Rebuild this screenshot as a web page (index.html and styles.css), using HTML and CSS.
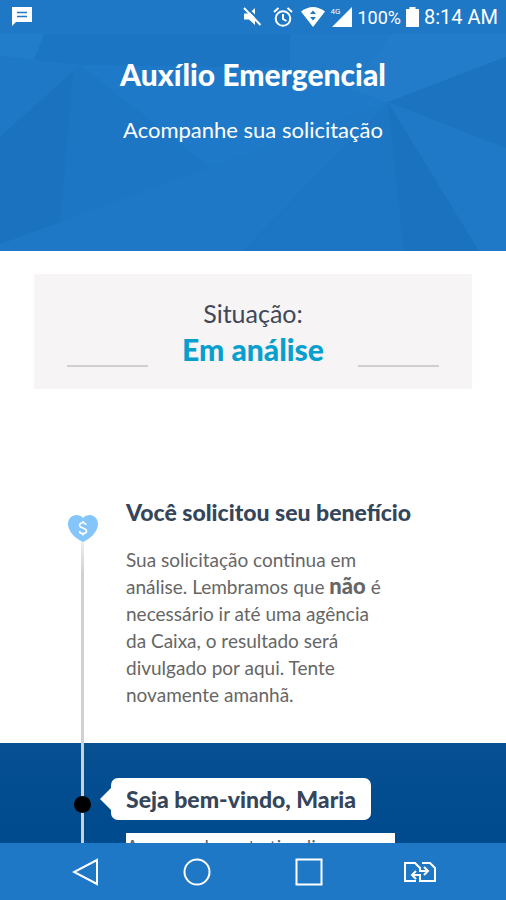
FILE: index.html
```html
<!DOCTYPE html>
<html lang="pt-BR">
<head>
    <meta charset="UTF-8">
    <title>Auxílio Emergencial</title>
    <meta name="viewport" content="width=device-width, initial-scale=1">
    <link rel="stylesheet" href="styles.css">
</head>
<body>
    <div class="status-bar">
        <svg width="20" height="20" viewBox="0 0 20 20" fill="#fff"><path d="M0 0h20v15H4l-4 4z"/><path d="M5 5.5h10M5 9.5h10" stroke="#1e78c6" stroke-width="1.3"/></svg>
        <div class="status-icons">
            <svg width="20" height="20" viewBox="0 0 20 20"><path d="M2 6.500h5l6-5.500v17l-6-5.500H2z" fill="#fff"/><path d="M4 0l16 16" stroke="#1e78c6" stroke-width="2"/><path d="M2 1l16.500 17" stroke="#fff" stroke-width="2"/></svg>
            <svg class="alarm" width="20" height="20" viewBox="0 0 20 20" fill="none" stroke="#fff" stroke-width="2"><circle cx="10" cy="11.5" r="7.3"/><path d="M1 5l4.500-4M19 5l-4.500-4M10 7v5l3.500 2"/></svg>
            <svg width="24" height="20" viewBox="0 0 24 20"><path d="M0 4.500Q12-4.500 24 4.500L12 20z" fill="#fff"/><path d="M12 3.500l3 3.500H9zM12 13.500L9 10h6z" fill="#1e78c6"/></svg>
            <span class="signal">
                <span class="signal-type">4G</span>
                <svg width="20" height="20" viewBox="0 0 20 20"><path d="M20 0v20H0z" fill="#fff"/></svg>
            </span>
            <span class="battery">100%</span>
            <svg width="13" height="20" viewBox="0 0 13 20"><path d="M3.500 0h6v2H13v18H0V2h3.500z" fill="#fff"/></svg>
            <span class="clock">8:14 AM</span>
        </div>
    </div>

    <main>
        <header class="hero">
            <svg class="hero-bg" viewBox="0 0 506 217" preserveAspectRatio="none">
                <path d="M0 0h44L34 26 0 22z" fill="#227dca"/>
                <path d="M44 0h246v34L80 31 34 26z" fill="#1c75c2"/>
                <path d="M290 0h216v23L388 68l-98-8z" fill="#217bc8"/>
                <path d="M392 0h114v23L388 68l-42-6z" fill="#247ecb"/>
                <path d="M0 22l80 9L0 103z" fill="#2079c7"/>
                <path d="M80 31l130 102L0 210V103z" fill="#1c76c3"/>
                <path d="M73 38L60 188 0 210V103z" fill="#1b73bf"/>
                <path d="M80 31l210 3 98 34-178 65z" fill="#1f7aca"/>
                <path d="M388 68L242 217h162z" fill="#1c76c4"/>
                <path d="M388 68l16 149h75z" fill="#1b72be"/>
                <path d="M388 68l118 46v103h-27z" fill="#217ac7"/>
                <path d="M388 68l118-45v91z" fill="#1c74c1"/>
            </svg>
            <h1>Auxílio Emergencial</h1>
            <p>Acompanhe sua solicitação</p>
        </header>

        <section class="card">
            <div class="card-line"></div>
            <div class="card-text">
                <p>Situação:</p>
                <h2>Em análise</h2>
            </div>
            <div class="card-line"></div>
        </section>

        <section class="step">
            <div class="marker">
                <svg class="heart" width="30" height="27" viewBox="0 0 30 27"><path d="M15 27C10 25 0 18 0 9 0 1 9-3 15 3c6-6 15-2 15 6 0 9-10 16-15 18z" fill="#84c5fb"/><path d="M18 10c0-3-6.500-3-6.500.500 0 3 7 2 7 5.500s-7 3.500-7 0M15 6v2M15 18.500v2" fill="none" stroke="#fff" stroke-width="1.600"/></svg>
                <div class="line line-fade"></div>
            </div>
            <div class="step-body">
                <h3>Você solicitou seu benefício</h3>
                <p>
                    Sua solicitação continua em<br>
                    análise. Lembramos que <strong>não</strong> é<br>
                    necessário ir até uma agência<br>
                    da Caixa, o resultado será<br>
                    divulgado por aqui. Tente<br>
                    novamente amanhã.
                </p>
            </div>
        </section>

        <section class="step welcome">
            <div class="marker">
                <div class="line"></div>
                <span class="dot"></span>
            </div>
            <div class="step-body">
                <h3 class="bubble">Seja bem-vindo, Maria</h3>
                <p class="note">Acompanhe esta timeline</p>
            </div>
        </section>
    </main>

    <nav class="nav-bar">
        <button aria-label="Voltar"><svg width="28" height="28" viewBox="0 0 28 28"><path d="M25 2v24L2 14z"/></svg></button>
        <button aria-label="Início"><svg width="28" height="28" viewBox="0 0 28 28"><circle cx="14" cy="14" r="12.500"/></svg></button>
        <button aria-label="Recentes"><svg width="28" height="28" viewBox="0 0 28 28"><path d="M1.500 1.500h25v25h-25z"/></svg></button>
        <button aria-label="Trocar chip"><svg width="32" height="22" viewBox="0 0 32 22"><path d="M12 20H1V2h10l5 5v3h8M20 6l4 4-4 4M18 2h8l5 5v13H16v-6H8M12 10l-4 4 4 4"/></svg></button>
    </nav>
</body>
</html>
```
FILE: styles.css
```css
* {
    box-sizing: border-box;
}
body {
    margin: 0;
    height: 100vh;
    display: flex;
    flex-direction: column;
    font-family: Lato, "Liberation Sans", sans-serif;
    background: #fff;
    color: #666;
}
h1, h2, h3, p {
    margin: 0;
}
h1, h2, h3, strong {
    font-weight: 900;
}
svg {
    display: block;
    flex: none;
}

/* status bar */
.status-bar {
    flex: none;
    display: flex;
    justify-content: space-between;
    align-items: center;
    height: 34px;
    padding: 0 8px 0 12px;
    background: #1e78c6;
    color: #fff;
    font-family: Roboto, sans-serif;
}
.status-icons {
    display: flex;
    align-items: center;
    gap: 5px;
}
.alarm {
    margin: 0 3px 0 6px;
}
.signal {
    position: relative;
    padding-left: 2px;
}
.signal-type {
    position: absolute;
    left: 0;
    top: 0;
    font-size: 8px;
    line-height: 9px;
}
.battery {
    font-size: 18px;
}
.clock {
    font-size: 20px;
}

main {
    flex: 1;
    min-height: 0;
    overflow: hidden;
}

/* top banner */
.hero {
    position: relative;
    height: 217px;
    padding-top: 24px;
    background: #1e78c6;
    color: #fff;
    text-align: center;
}
.hero-bg {
    position: absolute;
    inset: 0;
    width: 100%;
    height: 100%;
    opacity: 0.8;
}
.hero h1,
.hero p {
    position: relative;
}
.hero h1 {
    font-size: 30px;
    line-height: 32px;
}
.hero p {
    margin-top: 24px;
    font-size: 22px;
    line-height: 32px;
}

.card {
    display: flex;
    justify-content: space-between;
    align-items: flex-end;
    height: 115px;
    margin: 23px 34px 0;
    padding: 0 33px 22px;
    background: #f6f4f5;
    text-align: center;
}
.card-line {
    width: 81px;
    border-top: 2px solid #d0d0d2;
}
.card-text p {
    color: #404858;
    font-size: 25px;
    line-height: 36px;
}
.card-text h2 {
    color: #07a0ce;
    font-size: 30px;
    line-height: 36px;
}

/* timeline */
.step {
    display: flex;
    gap: 28px;
    margin-top: 107px;
    padding-left: 67px;
}
.marker {
    display: flex;
    flex-direction: column;
    align-items: center;
    width: 31px;
}
.heart {
    margin-top: 19px;
}
.line {
    flex: 1;
    width: 3px;
    background: #d0d0d2;
}
.line-fade {
    background: linear-gradient(#eee, #d0d0d2 32px);
}
.step-body {
    padding-bottom: 35px;
}
.step h3 {
    color: #35455a;
    font-size: 23px;
    line-height: 32px;
}
.step p {
    margin-top: 18px;
    font-size: 19px;
    line-height: 27px;
}
.step strong {
    font-size: 22px;
    line-height: 1;
}
.welcome {
    min-height: 160px;
    margin-top: 0;
    background: linear-gradient(#075193, #004b8d 80px);
}
.welcome .marker {
    position: relative;
}
.dot {
    position: absolute;
    top: 53px;
    width: 17px;
    height: 17px;
    border-radius: 50%;
    background: #000;
}
.step .bubble {
    position: relative;
    width: fit-content;
    margin: 35px 0 0 -15px;
    padding: 5px 15px;
    border-radius: 7px;
    background: #fff;
}
.bubble::before {
    content: "";
    position: absolute;
    left: -11px;
    top: 10px;
    border: 11px solid transparent;
    border-left-width: 0;
    border-right-color: #fff;
}
.step .note {
    width: 269px;
    margin-top: 13px;
    background: #fff;
}

/* navigation bar */
.nav-bar {
    flex: none;
    display: flex;
    justify-content: space-around;
    align-items: center;
    height: 57px;
    padding: 0 30px;
    background: #1e78c6;
}
.nav-bar button {
    display: flex;
    justify-content: center;
    width: 48px;
    padding: 0;
    border: 0;
    background: none;
}
.nav-bar svg {
    fill: none;
    stroke: #fff;
    stroke-width: 2;
}
```
